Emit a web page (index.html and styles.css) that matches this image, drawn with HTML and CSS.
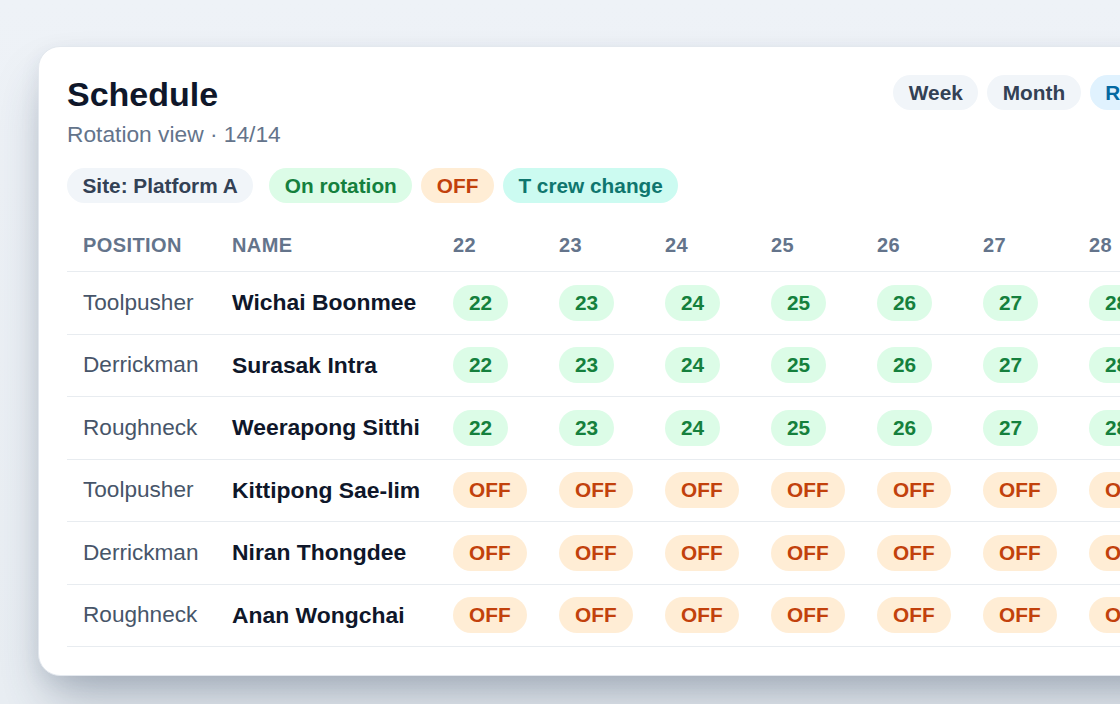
FILE: index.html
```html
<!DOCTYPE html>
<html lang="en">
<head>
<meta charset="utf-8">
<title>Schedule</title>
<link rel="stylesheet" href="styles.css">
</head>
<body>
<main class="stage">
  <section class="card">
    <header class="card-head">
      <div class="titles">
        <h1 class="title">Schedule</h1>
        <p class="subtitle">Rotation view · 14/14</p>
      </div>
      <nav class="views">
        <span class="chip chip-slate">Week</span>
        <span class="chip chip-slate">Month</span>
        <span class="chip chip-blue">Rotation</span>
      </nav>
    </header>
    <div class="legend">
      <span class="chip chip-slate chip-site">Site: Platform A</span>
      <span class="chip chip-green">On rotation</span>
      <span class="chip chip-orange">OFF</span>
      <span class="chip chip-teal">T crew change</span>
    </div>
    <div class="table">
      <div class="row row-head">
        <div class="cell">POSITION</div>
        <div class="cell">NAME</div>
        <div class="cell">22</div><div class="cell">23</div><div class="cell">24</div><div class="cell">25</div><div class="cell">26</div><div class="cell">27</div><div class="cell">28</div><div class="cell">29</div><div class="cell">30</div>
      </div>
      <div class="row">
        <div class="cell pos">Toolpusher</div>
        <div class="cell name">Wichai Boonmee</div>
        <div class="cell"><span class="pill on">22</span></div><div class="cell"><span class="pill on">23</span></div><div class="cell"><span class="pill on">24</span></div><div class="cell"><span class="pill on">25</span></div><div class="cell"><span class="pill on">26</span></div><div class="cell"><span class="pill on">27</span></div><div class="cell"><span class="pill on">28</span></div><div class="cell"><span class="pill on">29</span></div><div class="cell"><span class="pill on">30</span></div>
      </div>
      <div class="row">
        <div class="cell pos">Derrickman</div>
        <div class="cell name">Surasak Intra</div>
        <div class="cell"><span class="pill on">22</span></div><div class="cell"><span class="pill on">23</span></div><div class="cell"><span class="pill on">24</span></div><div class="cell"><span class="pill on">25</span></div><div class="cell"><span class="pill on">26</span></div><div class="cell"><span class="pill on">27</span></div><div class="cell"><span class="pill on">28</span></div><div class="cell"><span class="pill on">29</span></div><div class="cell"><span class="pill on">30</span></div>
      </div>
      <div class="row">
        <div class="cell pos">Roughneck</div>
        <div class="cell name">Weerapong Sitthi</div>
        <div class="cell"><span class="pill on">22</span></div><div class="cell"><span class="pill on">23</span></div><div class="cell"><span class="pill on">24</span></div><div class="cell"><span class="pill on">25</span></div><div class="cell"><span class="pill on">26</span></div><div class="cell"><span class="pill on">27</span></div><div class="cell"><span class="pill on">28</span></div><div class="cell"><span class="pill on">29</span></div><div class="cell"><span class="pill on">30</span></div>
      </div>
      <div class="row">
        <div class="cell pos">Toolpusher</div>
        <div class="cell name">Kittipong Sae-lim</div>
        <div class="cell"><span class="pill off">OFF</span></div><div class="cell"><span class="pill off">OFF</span></div><div class="cell"><span class="pill off">OFF</span></div><div class="cell"><span class="pill off">OFF</span></div><div class="cell"><span class="pill off">OFF</span></div><div class="cell"><span class="pill off">OFF</span></div><div class="cell"><span class="pill off">OFF</span></div><div class="cell"><span class="pill off">OFF</span></div><div class="cell"><span class="pill off">OFF</span></div>
      </div>
      <div class="row">
        <div class="cell pos">Derrickman</div>
        <div class="cell name">Niran Thongdee</div>
        <div class="cell"><span class="pill off">OFF</span></div><div class="cell"><span class="pill off">OFF</span></div><div class="cell"><span class="pill off">OFF</span></div><div class="cell"><span class="pill off">OFF</span></div><div class="cell"><span class="pill off">OFF</span></div><div class="cell"><span class="pill off">OFF</span></div><div class="cell"><span class="pill off">OFF</span></div><div class="cell"><span class="pill off">OFF</span></div><div class="cell"><span class="pill off">OFF</span></div>
      </div>
      <div class="row">
        <div class="cell pos">Roughneck</div>
        <div class="cell name">Anan Wongchai</div>
        <div class="cell"><span class="pill off">OFF</span></div><div class="cell"><span class="pill off">OFF</span></div><div class="cell"><span class="pill off">OFF</span></div><div class="cell"><span class="pill off">OFF</span></div><div class="cell"><span class="pill off">OFF</span></div><div class="cell"><span class="pill off">OFF</span></div><div class="cell"><span class="pill off">OFF</span></div><div class="cell"><span class="pill off">OFF</span></div><div class="cell"><span class="pill off">OFF</span></div>
      </div>
    </div>
  </section>
</main>
</body>
</html>
```

FILE: styles.css
```css
* { box-sizing: border-box; }

html, body {
  margin: 0;
  padding: 0;
  width: 1120px;
  height: 704px;
  overflow: hidden;
}

body {
  background: linear-gradient(180deg, #eef2f7 0%, #e9eef3 100%);
  font-family: "Liberation Sans", Arial, sans-serif;
  color: #0f172a;
}

.stage {
  padding: 46px 0 0 38px;
}

.card {
  width: 1195px;
  background: #ffffff;
  border: 1px solid #e3e8ee;
  border-radius: 22px;
  padding: 27px 27px 28px 28px;
  box-shadow: 0 30px 50px -10px rgba(40, 60, 85, 0.34), 0 6px 20px rgba(40, 60, 85, 0.08);
  overflow: hidden;
}

.card-head {
  display: flex;
  justify-content: space-between;
  align-items: flex-start;
}

.title {
  margin: 0;
  font-size: 34px;
  line-height: 41px;
  font-weight: 700;
  color: #0f172a;
}

.subtitle {
  margin: 5px 0 0;
  font-size: 22.75px;
  line-height: 28px;
  color: #64748b;
}

.views {
  display: flex;
  gap: 9px;
  margin-top: 1px;
}

.chip {
  display: inline-block;
  height: 35px;
  line-height: 35px;
  padding: 0 15.5px;
  border-radius: 18px;
  font-size: 20.8px;
  font-weight: 700;
  white-space: nowrap;
}

.chip-slate { background: #f1f5f9; color: #334155; }
.chip-blue { background: #e0f2fe; color: #0369a1; }
.chip-green { background: #dcfce7; color: #15803d; }
.chip-orange { background: #ffedd5; color: #c2410c; }
.chip-teal { background: #ccfbf1; color: #0f766e; }

.legend {
  display: flex;
  gap: 9px;
  margin-top: 20px;
}

.chip-site { margin-right: 7px; }

.table {
  margin-top: 21px;
  overflow: hidden;
}

.row {
  display: grid;
  grid-template-columns: 149px 221px repeat(9, 106px);
  align-items: center;
  height: 62.5px;
  border-bottom: 1px solid #e8ecf0;
}

.row-head {
  height: 48px;
  font-size: 20px;
  letter-spacing: 0.4px;
  font-weight: 700;
  color: #64748b;
}

.row-head .cell {
  padding-bottom: 5px;
}

.cell {
  padding: 0 16px;
  white-space: nowrap;
}

.pos {
  font-size: 22.6px;
  color: #475569;
}

.name {
  font-size: 22.9px;
  font-weight: 700;
  color: #0f172a;
}

.pill {
  display: inline-block;
  height: 36px;
  line-height: 36px;
  padding: 0 16px;
  border-radius: 18px;
  font-size: 20.8px;
  font-weight: 700;
}

.pill.on { background: #dcfce7; color: #15803d; }
.pill.off { background: #ffedd5; color: #c2410c; }
```
